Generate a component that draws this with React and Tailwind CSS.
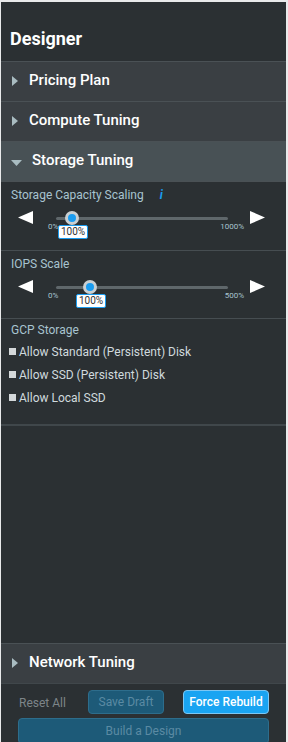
import React from "react";

const font = { fontFamily: "Roboto, 'Liberation Sans', sans-serif" };

function Tri({ down }) {
  return down ? (
    <svg width="11" height="8" viewBox="0 0 11 8" className="shrink-0 mt-[4px]">
      <polygon points="0,1 11,1 5.5,7" fill="#a9bcc1" />
    </svg>
  ) : (
    <svg width="8" height="10" viewBox="0 0 8 10" className="shrink-0">
      <polygon points="1,0 7,5 1,10" fill="#a9bcc1" />
    </svg>
  );
}

function Header({ title, open }) {
  return (
    <div
      className={`flex items-center h-[40px] pl-[10px] gap-[10px] border-t border-[#4a5155] pb-[2px] ${
        open ? "bg-[#485155]" : "bg-[#3a3f43]"
      }`}
    >
      <Tri down={open} />
      <span className="text-[15px] font-medium text-white">{title}</span>
    </div>
  );
}

function Slider({ pos, max }) {
  return (
    <div className="relative h-[40px]">
      <svg className="absolute left-[17px] top-[8px]" width="15" height="13" viewBox="0 0 15 13">
        <polygon points="15,0 15,13 0,6.5" fill="#ffffff" />
      </svg>
      <svg className="absolute left-[249px] top-[8px]" width="15" height="13" viewBox="0 0 15 13">
        <polygon points="0,0 0,13 15,6.5" fill="#ffffff" />
      </svg>
      <div className="absolute left-[55px] top-[14px] w-[172px] h-[3px] rounded bg-[#5f676b]" />
      <div
        className="absolute top-[8px] w-[14px] h-[14px] rounded-full bg-[#1a9cf0] border-[3px] border-[#c9cfd2]"
        style={{ left: pos - 7 }}
      />
      <span className="absolute left-[47px] top-[18px] text-[8px] text-[#a8c4d0]">0%</span>
      <span className="absolute right-[42px] top-[18px] text-[8px] text-[#a8c4d0]">{max}</span>
      <div
        className="absolute top-[22px] px-[2px] h-[14px] leading-[12px] bg-white border border-[#1a9cf0] rounded-[2px] text-[10px] text-[#333]"
        style={{ left: pos - 14 }}
      >
        100%
      </div>
    </div>
  );
}

function Check({ label }) {
  return (
    <div className="flex items-center gap-[3px] h-[23px] pl-[8px]">
      <div className="w-[7px] h-[7px] bg-[#d4d8da]" />
      <span className="text-[12px] text-[#d0dade]">{label}</span>
    </div>
  );
}

export default function App() {
  return (
    <div className="w-[288px] h-[742px] bg-[#e9eaeb] pt-[2px] pl-[1px] pr-[2px]" style={font}>
      <div className="h-[740px] bg-[#2b3033] flex flex-col">
        <div className="h-[59px] flex items-end pl-[9px] pb-[9px]">
          <span className="text-[18px] font-bold text-white">Designer</span>
        </div>
        <Header title="Pricing Plan" />
        <Header title="Compute Tuning" />
        <Header title="Storage Tuning" open />
        <div className="border-t border-[#4a5155]">
          <div className="pt-[5px] pl-[10px] flex items-center h-[21px]">
            <span className="text-[12px] text-[#a8c4d0]">Storage Capacity Scaling</span>
            <span className="ml-[16px] text-[12px] italic font-bold text-[#1a9cf0]">i</span>
          </div>
          <Slider pos={71} max="1000%" />
        </div>
        <div className="border-t border-[#464d51] mt-[7px]">
          <div className="pt-[4px] pl-[10px] h-[21px] flex items-center">
            <span className="text-[12px] text-[#a8c4d0]">IOPS Scale</span>
          </div>
          <Slider pos={89} max="500%" />
        </div>
        <div className="border-t border-[#464d51] mt-[6px] pb-[15px]">
          <div className="pl-[10px] h-[21px] flex items-center">
            <span className="text-[12px] text-[#a8c4d0]">GCP Storage</span>
          </div>
          <Check label="Allow Standard (Persistent) Disk" />
          <Check label="Allow SSD (Persistent) Disk" />
          <Check label="Allow Local SSD" />
        </div>
        <div className="border-t-2 border-[#40474b] flex-1" />
        <Header title="Network Tuning" />
        <div className="border-t border-[#40474b] bg-[#2b3033] h-[59px] shrink-0 relative">
          <span className="absolute left-[18px] top-[10px] text-[12px] text-[#7d8589]">Reset All</span>
          <div className="absolute left-[87px] top-[6px] w-[76px] h-[24px] rounded-[4px] bg-[#1d5a78] border border-[#2d6d8c] text-[12px] text-[#5b8aa3] flex items-center justify-center">
            Save Draft
          </div>
          <div className="absolute left-[182px] top-[6px] w-[86px] h-[24px] rounded-[4px] bg-[#19a4f2] border border-[#7cc7f4] text-[12px] font-medium text-white flex items-center justify-center">
            Force Rebuild
          </div>
          <div className="absolute left-[17px] top-[34px] w-[251px] h-[26px] rounded-[4px] bg-[#1d5a78] border border-[#2d6d8c] text-[12px] text-[#5b8aa3] flex items-center justify-center">
            Build a Design
          </div>
        </div>
      </div>
    </div>
  );
}
